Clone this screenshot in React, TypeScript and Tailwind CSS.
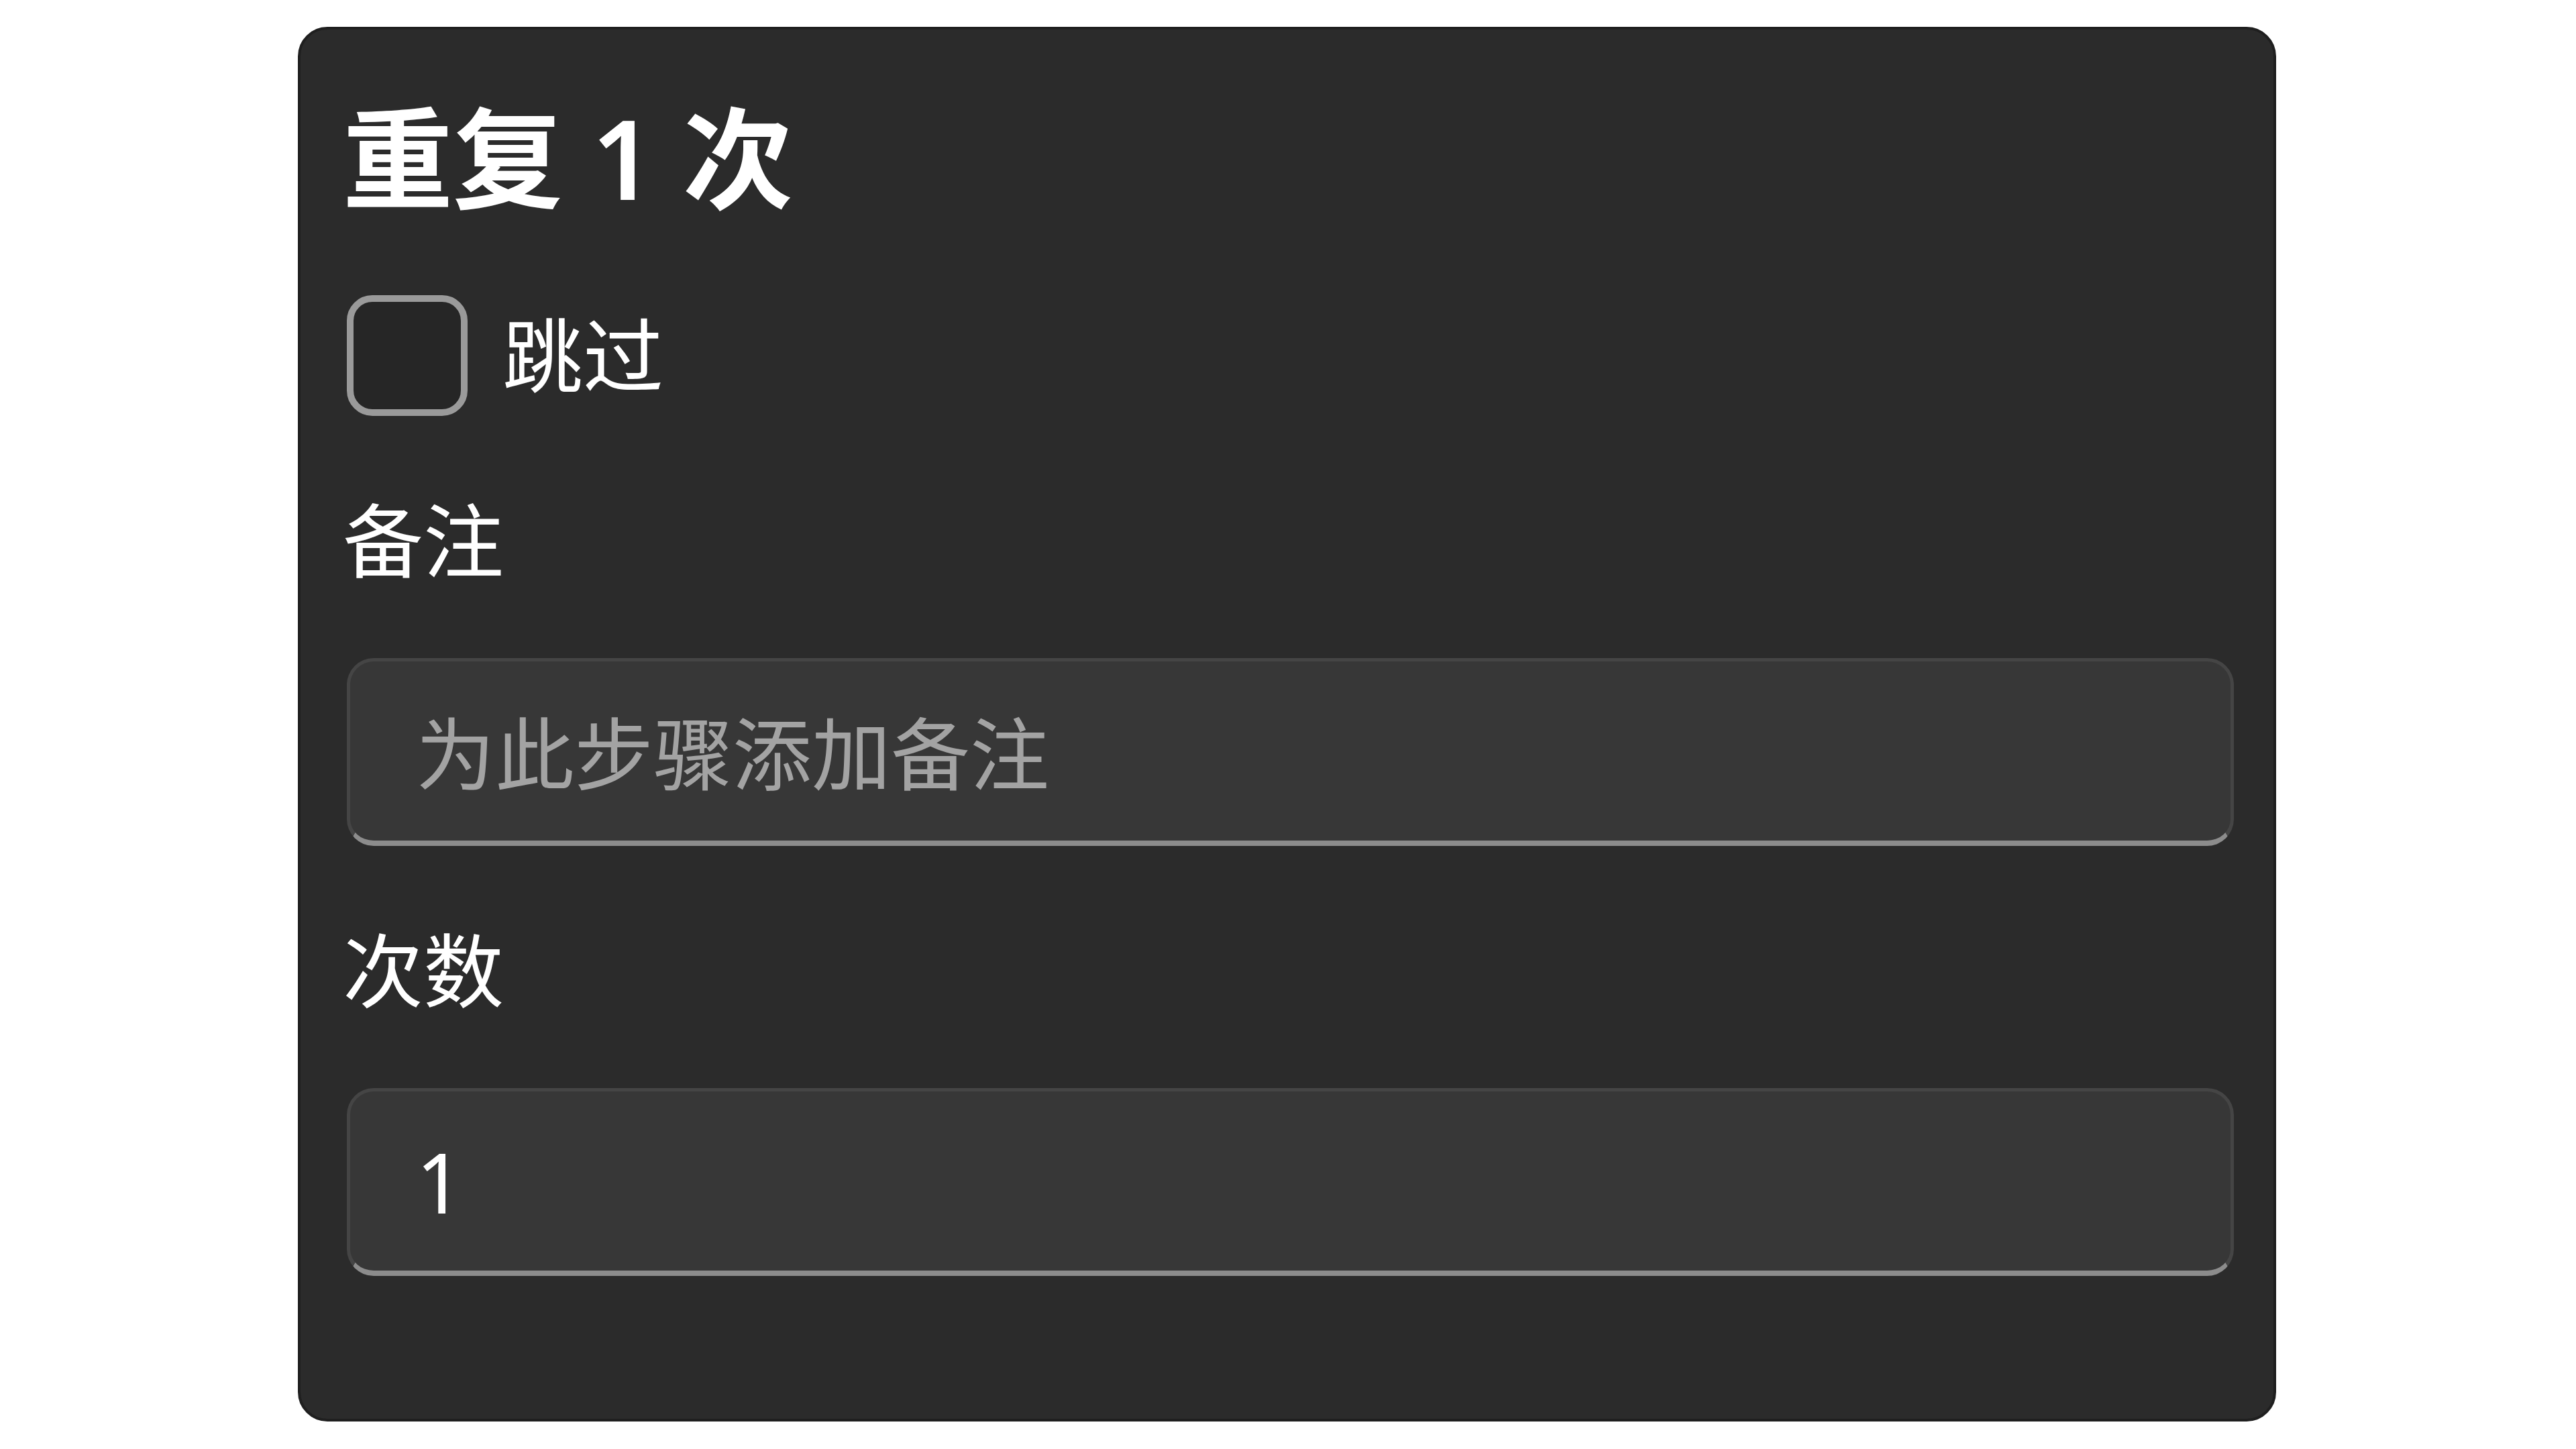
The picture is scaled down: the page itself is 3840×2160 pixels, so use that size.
const font = "font-['Noto_Sans','Noto_Sans_CJK_SC',sans-serif]";

function Field({ label, value, placeholder }: { label: string; value?: string; placeholder?: string }) {
  return (
    <>
      <label className="-ml-[6px] mt-[103px] text-[120px] leading-[165px] text-white">{label}</label>
      <div className="mt-[93px] flex h-[280px] items-center rounded-[40px] border-[5px] border-[#454545] border-b-[8px] border-b-[#8c8c8c] bg-[#373737] pl-[98px]">
        {value ? (
          <span className="text-[124px] leading-none text-white">{value}</span>
        ) : (
          <span className="pt-[8px] text-[118px] leading-none text-[#a3a3a3]">{placeholder}</span>
        )}
      </div>
    </>
  );
}

export default function App() {
  return (
    <div className={`min-h-screen bg-white pt-[40px] pl-[444px] ${font}`}>
      <div className="flex h-[2079px] w-[2949px] flex-col rounded-[44px] border-[4px] border-[#1f1f1f] bg-[#2b2b2b] pt-[82px] pr-[59px] pl-[69px]">
        <h2 className="-ml-[6px] text-[164px] font-bold leading-[218px] text-white">
          重复 <span className="font-semibold">1</span> 次
        </h2>

        <div className="mt-[96px] flex items-center gap-[52px]">
          <div className="h-[180px] w-[180px] rounded-[38px] border-[10px] border-[#9a9a9a] bg-[#262626]" />
          <span className="text-[120px] leading-none text-white">跳过</span>
        </div>

        <Field label="备注" placeholder="为此步骤添加备注" />
        <Field label="次数" value="1" />
      </div>
    </div>
  );
}
